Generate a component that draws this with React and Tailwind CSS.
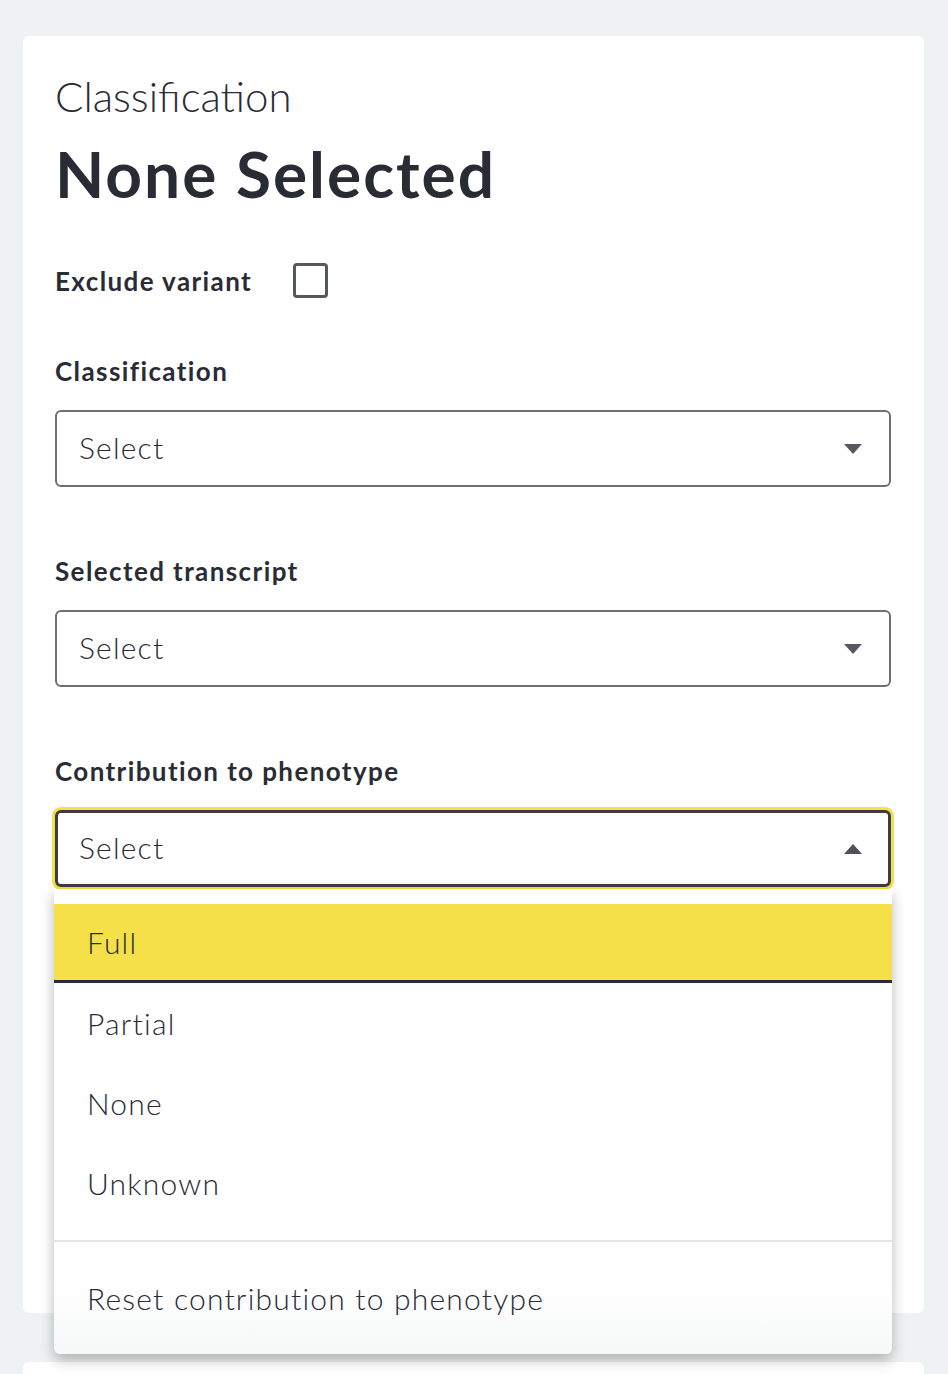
import React from 'react';

const font = { fontFamily: 'Lato, "Noto Sans", sans-serif' };

const Caret = ({ up }) => (
  <svg width="18" height="10" viewBox="0 0 18 10" className="shrink-0">
    {up ? <path d="M0 10 L9 0 L18 10 Z" fill="#4f525a" /> : <path d="M0 0 L18 0 L9 10 Z" fill="#55585f" />}
  </svg>
);

const SelectBox = ({ open }) => (
  <div
    className={
      open
        ? 'flex items-center justify-between h-[77px] pl-[21px] pr-[26px] bg-white rounded-[6px] border-[3px] border-[#3a3d44] ring-[3px] ring-[#f5e04a]'
        : 'flex items-center justify-between h-[77px] pl-[22px] pr-[27px] bg-white rounded-[6px] border-2 border-[#6d7075]'
    }
  >
    <span className="text-[30px] font-light tracking-[1.2px] text-[#2a2c35] leading-none -mt-[3px]">Select</span>
    <Caret up={open} />
  </div>
);

const Label = ({ children, className = '' }) => (
  <div className={`text-[26px] font-bold tracking-[1.4px] text-[#2a2c35] leading-[30px] ${className}`}>{children}</div>
);

const options = ['Partial', 'None', 'Unknown'];

export default function App() {
  return (
    <div className="min-h-[1374px] bg-[#eff2f3] pl-[23px] pr-[24px] pt-[36px] overflow-hidden" style={font}>
      <div className="h-[1277px] bg-white rounded-[6px] pl-[32px] pr-[33px] pt-[35px]">
        <div className="text-[42px] font-light leading-[50px] text-[#2a2c35]">Classification</div>
        <h1 className="mt-[14px] text-[64px] font-bold tracking-[2px] leading-[77px] text-[#2a2c35]">None Selected</h1>

        <div className="mt-[51px] flex items-center gap-[41px]">
          <Label>Exclude variant</Label>
          <span className="w-[35px] h-[35px] rounded-[4px] border-[3px] border-[#55585f] bg-white" />
        </div>

        <Label className="mt-[58px]">Classification</Label>
        <div className="mt-[24px]">
          <SelectBox />
        </div>

        <Label className="mt-[69px]">Selected transcript</Label>
        <div className="mt-[24px]">
          <SelectBox />
        </div>

        <Label className="mt-[69px]">Contribution to phenotype</Label>
        <div className="mt-[24px] relative">
          <SelectBox open />
          <div className="absolute left-[-1px] right-[-1px] top-[79px] z-10 bg-gradient-to-b from-white from-85% to-[#f6f7f7] rounded-b-[6px] shadow-[0_6px_14px_rgba(0,0,0,0.28)] pt-[15px] text-[30px] font-light tracking-[1.2px] text-[#2a2c35]">
            <div className="h-[79px] flex items-center pl-[33px] bg-[#f5e04a] border-b-[3px] border-[#2b2e36]">Full</div>
            {options.map((o) => (
              <div key={o} className="h-[80px] flex items-center pl-[33px]">
                {o}
              </div>
            ))}
            <div className="mt-[17px] border-t-2 border-[#e3e5e6] h-[114px] flex items-center pl-[33px]">
              Reset contribution to phenotype
            </div>
          </div>
        </div>
      </div>
      <div className="mt-[49px] h-[200px] bg-white rounded-[6px]" />
    </div>
  );
}
